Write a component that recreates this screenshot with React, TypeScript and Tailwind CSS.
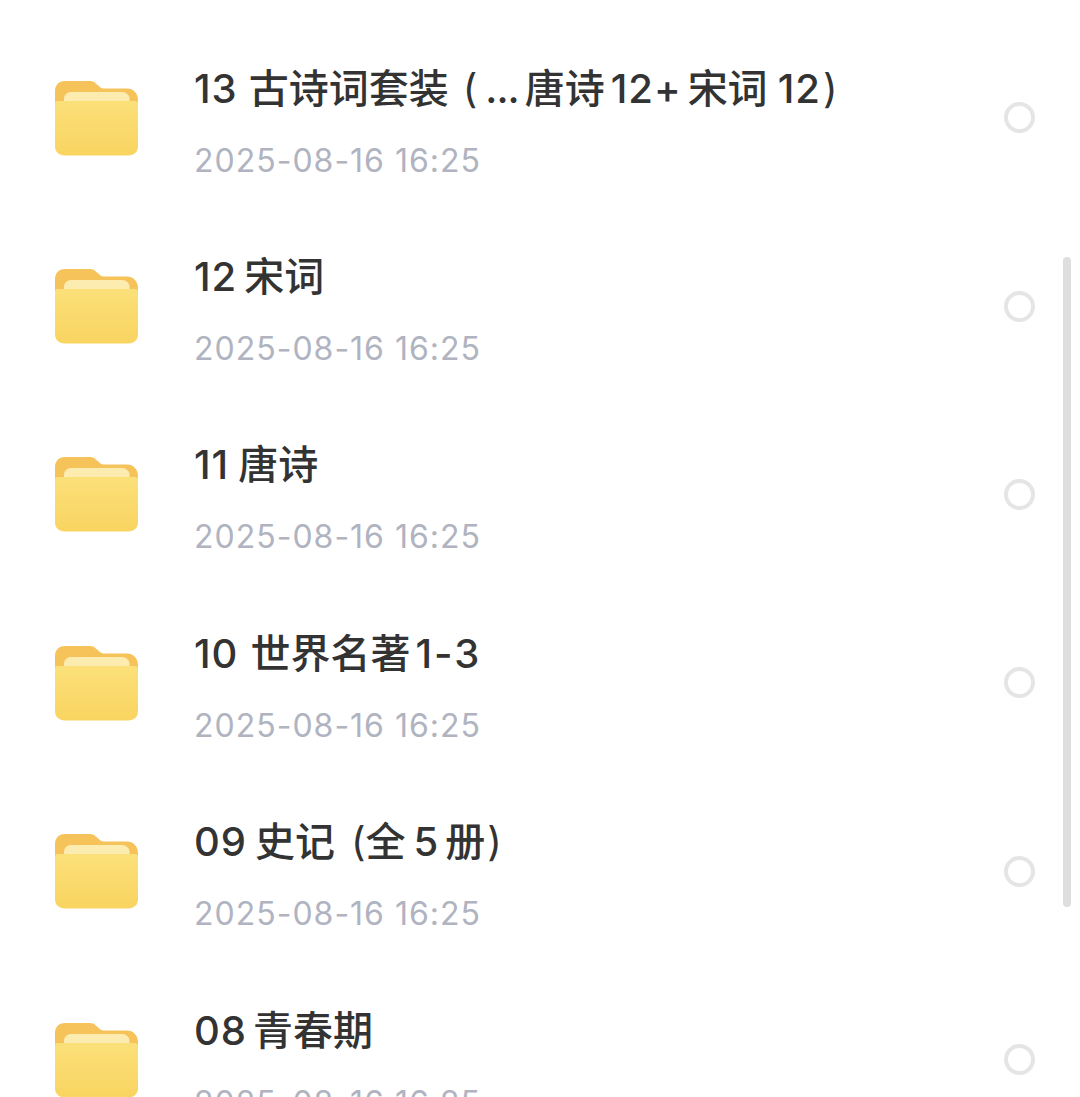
import type { ReactNode } from "react";

const L = ({ children, className = "" }: { children: ReactNode; className?: string }) => (
  <span className={`tracking-[1px] ${className}`}>{children}</span>
);

const rows: ReactNode[] = [
  <><L>13</L><span className="ml-[11px]">古诗词套装</span><span className="ml-[14px] font-normal">(</span><span className="ml-[8px] tracking-[-1px]">...</span><span className="ml-[6px]">唐诗</span><L className="ml-[6px]">12+</L><span className="ml-[6px]">宋词</span><L className="ml-[10px]">12</L><span className="ml-[2px] font-normal">)</span></>,
  <><L>12</L><span className="ml-[7px]">宋词</span></>,
  <><L>11</L><span className="ml-[9px]">唐诗</span></>,
  <><L>10</L><span className="ml-[12px]">世界名著</span><L className="ml-[5px] tracking-[2px]">1-3</L></>,
  <><L>09</L><span className="ml-[8px]">史记</span><span className="ml-[16px] font-normal">(</span>全<L className="ml-[8px]">5</L><span className="ml-[6px]">册</span><span className="ml-[2px] font-normal">)</span></>,
  <><L>08</L><span className="ml-[6px]">青春期</span></>,
];

function Folder({ id }: { id: number }) {
  return (
    <svg width="83" height="75" viewBox="0 0 83 75" className="mt-[1px] shrink-0">
      <defs>
        <linearGradient id={`front${id}`} x1="0" y1="0" x2="0" y2="1">
          <stop offset="0" stopColor="#fbe07a" />
          <stop offset="1" stopColor="#f9d460" />
        </linearGradient>
      </defs>
      <path d="M0 10C0 4 4 0 10 0H34C38 0 39.500 1 42 3.500L45 6C46 7 48 7.500 50 7.500H72C78 7.500 83 12 83 19V30H0Z" fill="#f6c35b" />
      <path d="M9 24V18C9 14 12 11 16 11H67C71 11 74.500 14 74.500 18V24Z" fill="#fdecb0" />
      <path d="M0 23C0 21 1 20 3 20H80C82 20 83 21 83 23V65C83 71 79 74.500 73 74.500H10C4 74.500 0 71 0 65Z" fill={`url(#front${id})`} />
    </svg>
  );
}

export default function App() {
  return (
    <div className="relative h-[1097px] w-[1080px] overflow-hidden bg-white pt-[23.500px] font-['Inter','Noto_Sans_CJK_SC',sans-serif]">
      {rows.map((title, i) => (
        <div key={i} className="flex h-[188.4px] items-center pl-[55px] pr-[45px]">
          <Folder id={i} />
          <div className="ml-[56px] flex min-w-0 flex-1 flex-col pt-[7px]">
            <div className="h-[52px] text-[40px] font-[550] leading-[52px] whitespace-nowrap text-[#333333]">
              {title}
            </div>
            <div className="mt-[27px] h-[38px] text-[32px] leading-[38px] tracking-[1px] whitespace-nowrap text-[#b0b3c0]">
              2025-08-16 16:25
            </div>
          </div>
          <div className="h-[31px] w-[31px] shrink-0 rounded-full border-[4px] border-[#e5e5e5]" />
        </div>
      ))}
      <div className="absolute left-[1063px] top-[257px] h-[650px] w-[8px] rounded-full bg-[#dedede]" />
    </div>
  );
}
